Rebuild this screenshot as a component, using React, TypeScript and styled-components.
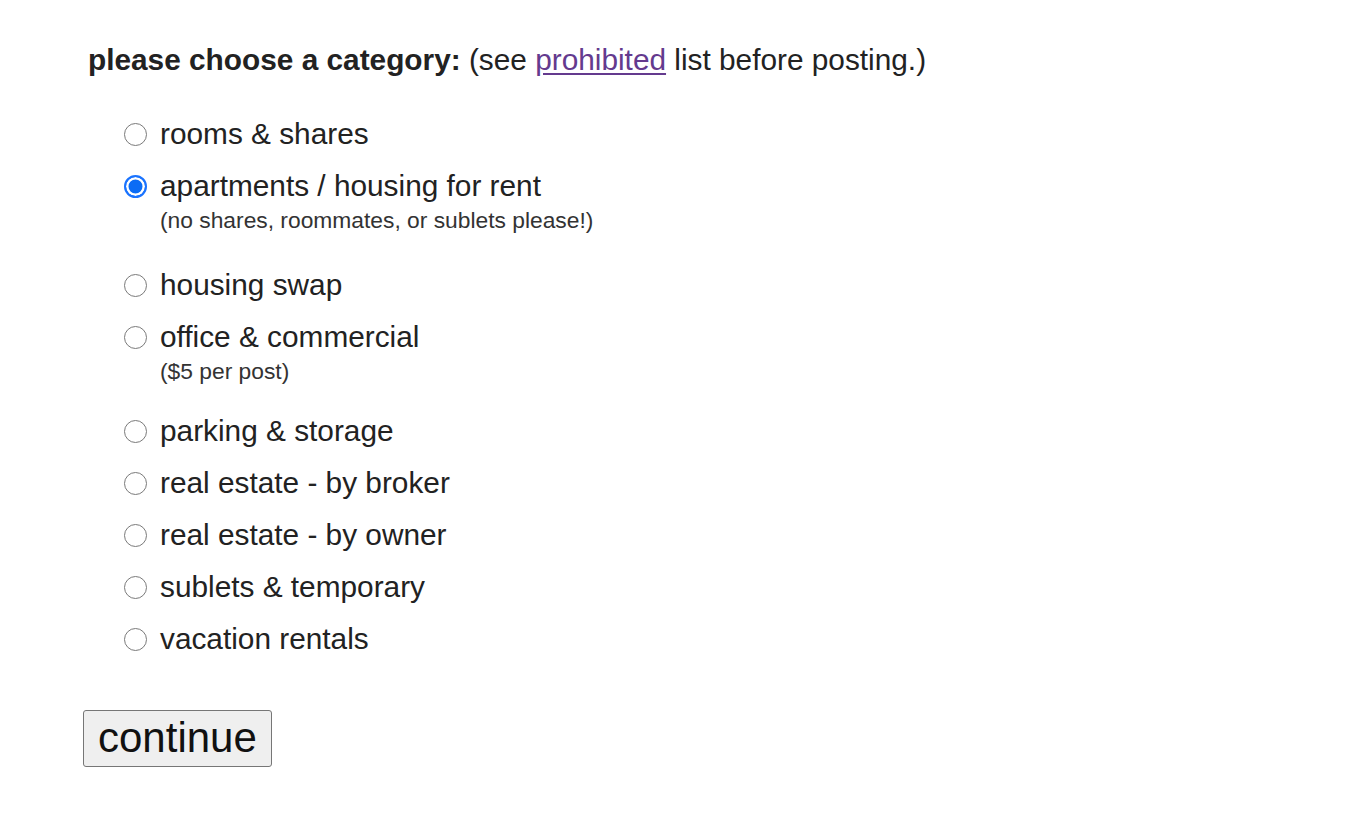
import React, { useState } from "react";
import styled, { createGlobalStyle } from "styled-components";

const Global = createGlobalStyle`
  html, body { margin: 0; padding: 0; background: #ffffff; }
  body { font-family: "Liberation Sans", Arial, sans-serif; color: #222222; }
`;

const Page = styled.form`
  padding: 41px 0 0 88px;
  width: 1272px;
  height: 778px;
`;

const Heading = styled.div`
  font-size: 29.8px;
  line-height: 38px;
  color: #222222;
  margin-bottom: 38px;
  white-space: nowrap;
`;

const Strong = styled.b`
  font-weight: bold;
`;

const Link = styled.a`
  color: #643a8e;
  text-decoration: underline;
  text-underline-offset: 3px;
`;

const List = styled.div`
  display: flex;
  flex-direction: column;
  padding-left: 35px;
`;

const Option = styled.label<{ $height: number }>`
  display: grid;
  grid-template-columns: 24px 1fr;
  column-gap: 13px;
  align-items: start;
  min-height: ${(p) => p.$height}px;
  cursor: pointer;
`;

const Radio = styled.input.attrs({ type: "radio" })`
  appearance: none;
  -webkit-appearance: none;
  margin: 6px 0 0 1px;
  width: 23px;
  height: 23px;
  border-radius: 50%;
  border: 1.5px solid #7a7a7a;
  background: #ffffff;
  box-sizing: border-box;
  cursor: pointer;
  &:checked {
    border: 2px solid #1a73ff;
    background: #0b6cf5;
    box-shadow: inset 0 0 0 2.5px #ffffff;
  }
  &:focus { outline: none; }
`;

const TextCol = styled.div`
  display: flex;
  flex-direction: column;
`;

const Main = styled.span`
  font-size: 29.8px;
  line-height: 34px;
  color: #222222;
  white-space: nowrap;
`;

const Sub = styled.span`
  font-size: 22.8px;
  line-height: 26px;
  color: #333333;
  margin-top: 4px;
  white-space: nowrap;
`;

const Button = styled.button`
  display: block;
  margin: 36px 0 0 -5px;
  font-family: "Liberation Sans", Arial, sans-serif;
  font-size: 42px;
  line-height: 46px;
  color: #111111;
  background: #efefef;
  border: 1.5px solid #767676;
  border-radius: 3px;
  padding: 4px 14px 5px;
  cursor: pointer;
`;

type Item = { label: string; note?: string; height: number };

const items: Item[] = [
  { label: "rooms & shares", height: 52 },
  { label: "apartments / housing for rent", note: "(no shares, roommates, or sublets please!)", height: 99 },
  { label: "housing swap", height: 52 },
  { label: "office & commercial", note: "($5 per post)", height: 94 },
  { label: "parking & storage", height: 52 },
  { label: "real estate - by broker", height: 52 },
  { label: "real estate - by owner", height: 52 },
  { label: "sublets & temporary", height: 52 },
  { label: "vacation rentals", height: 52 },
];

export default function App() {
  const [sel, setSel] = useState(1);
  return (
    <>
      <Global />
      <Page onSubmit={(e) => e.preventDefault()}>
        <Heading>
          <Strong>please choose a category:</Strong> (see <Link href="#">prohibited</Link> list before posting.)
        </Heading>
        <List>
          {items.map((it, i) => (
            <Option key={it.label} $height={it.height}>
              <Radio name="cat" checked={sel === i} onChange={() => setSel(i)} />
              <TextCol>
                <Main>{it.label}</Main>
                {it.note && <Sub>{it.note}</Sub>}
              </TextCol>
            </Option>
          ))}
        </List>
        <Button type="submit">continue</Button>
      </Page>
    </>
  );
}
